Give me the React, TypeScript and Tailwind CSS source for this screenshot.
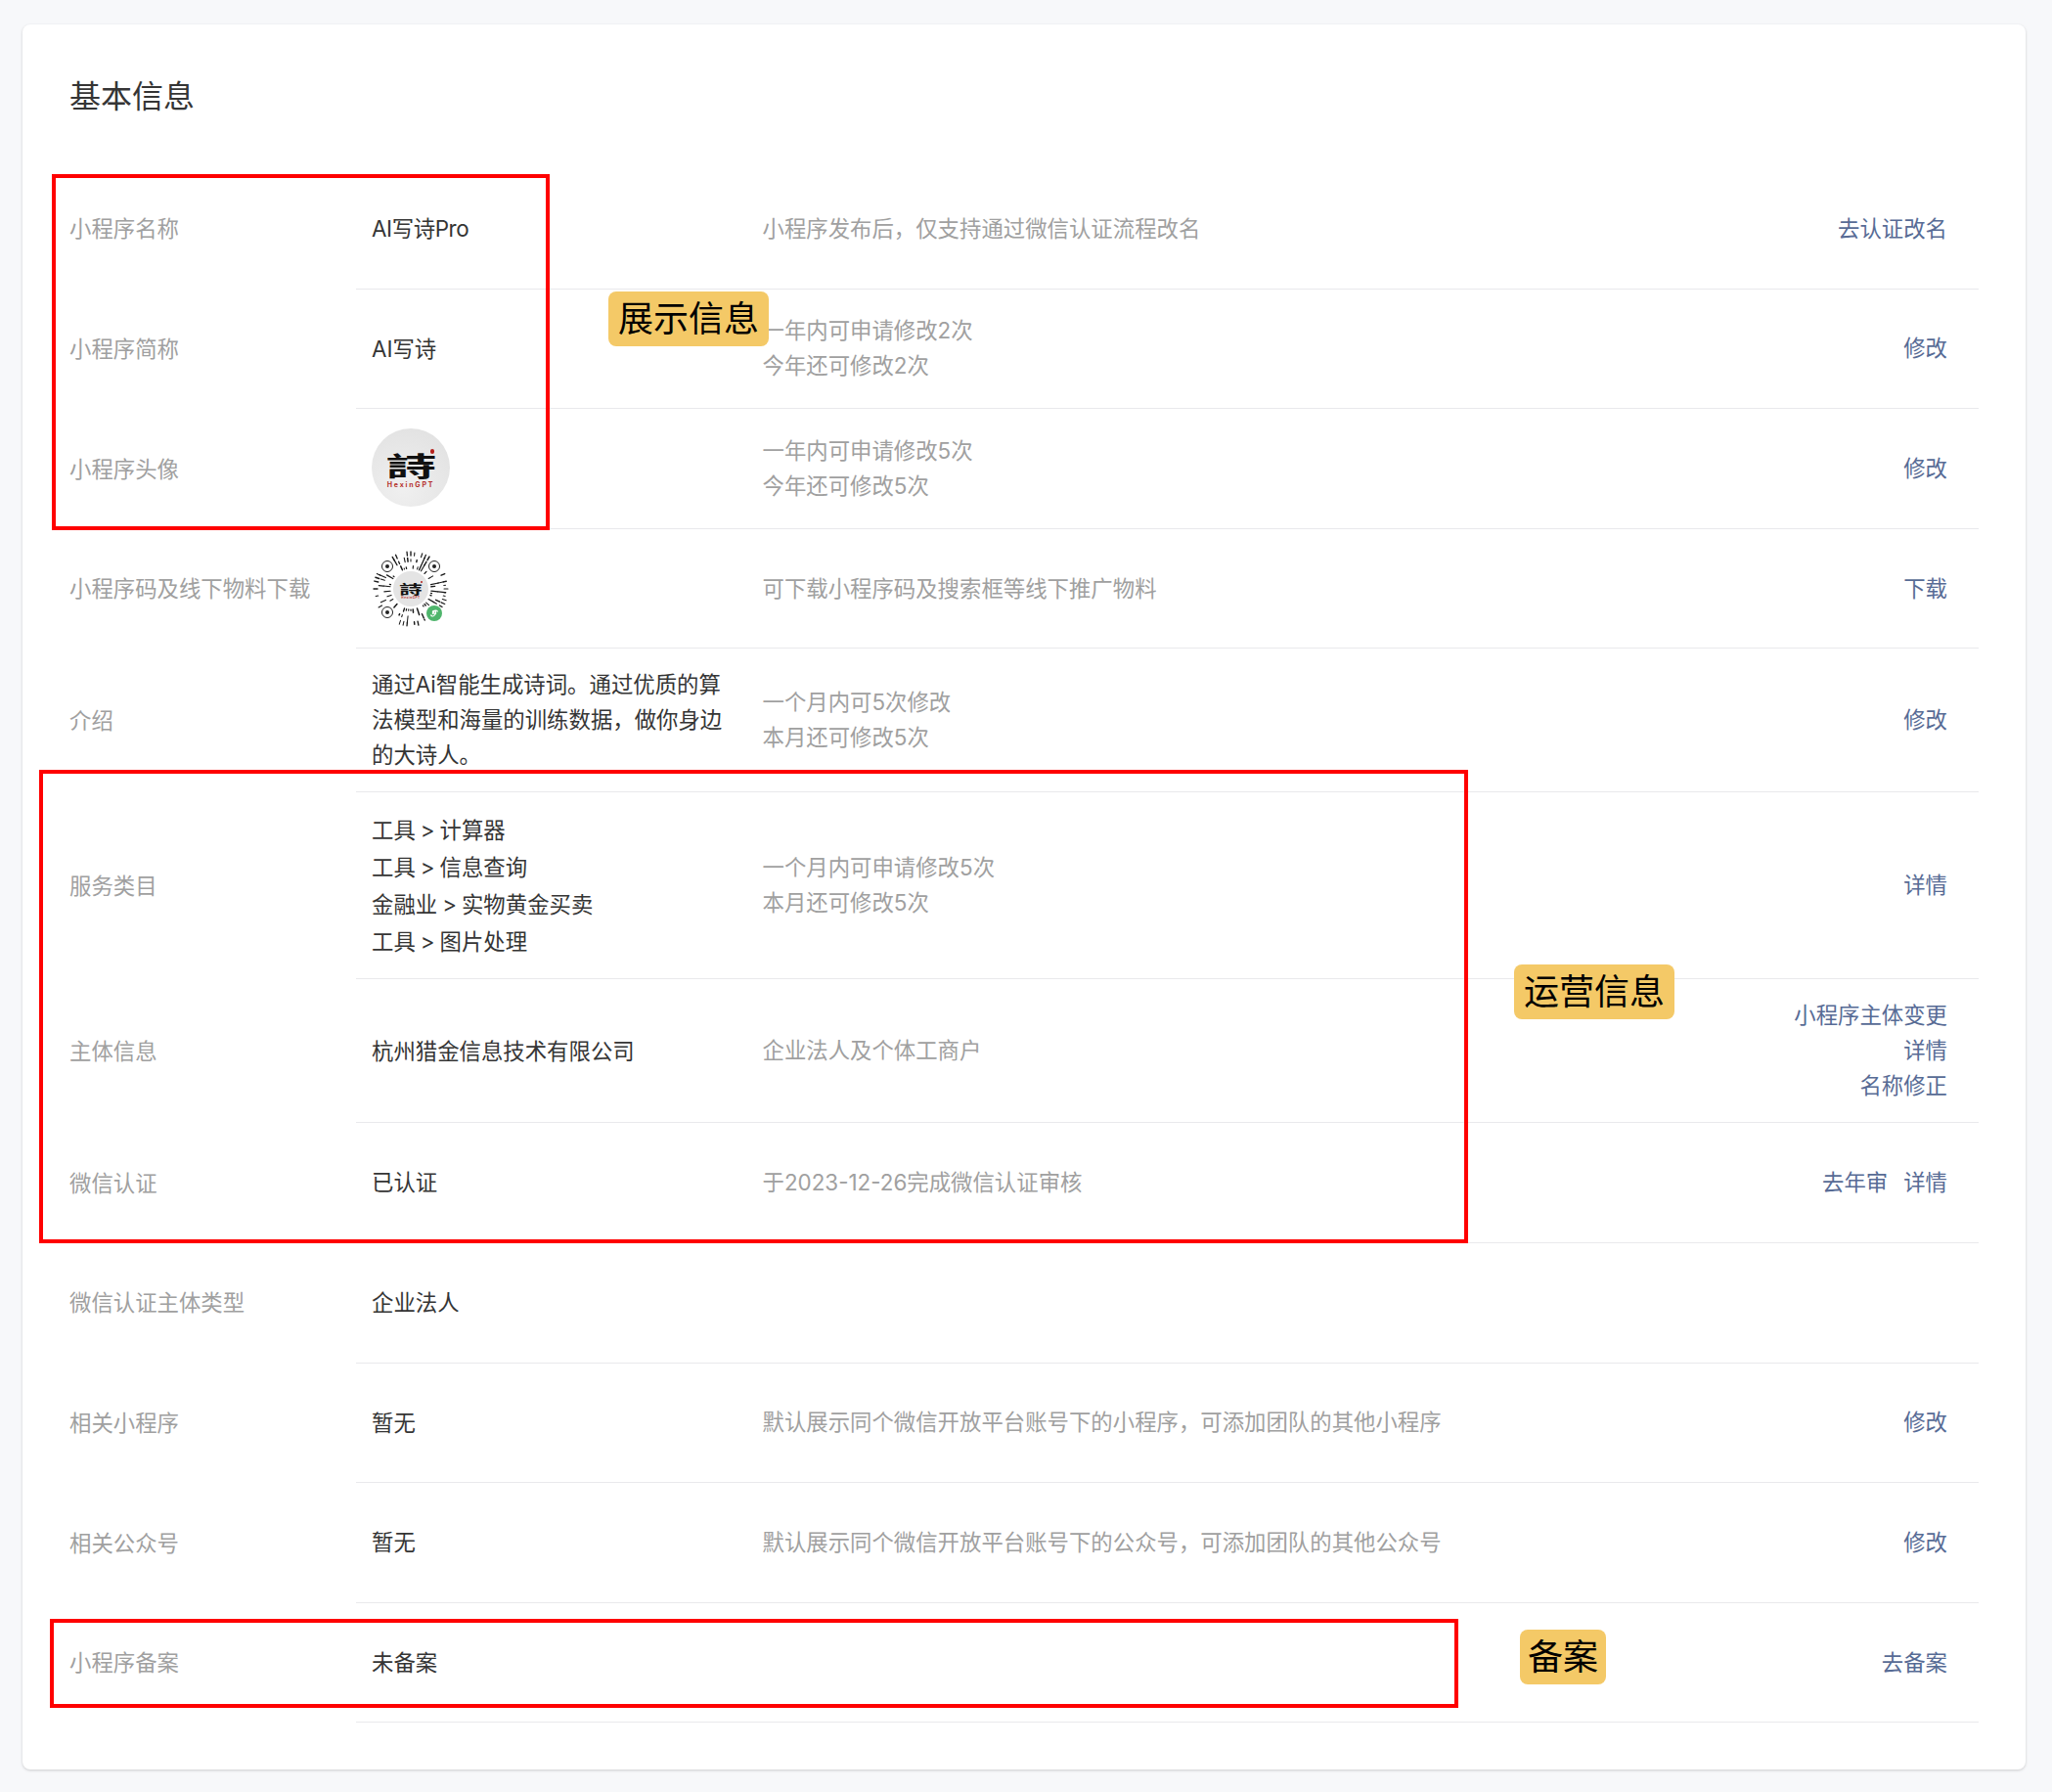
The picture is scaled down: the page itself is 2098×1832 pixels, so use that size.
import React from "react";

type Row = {
  label: string;
  value?: React.ReactNode;
  desc?: string[];
  links?: string[];
  inlineLinks?: boolean;
  height: string;
};

const Avatar = () => (
  <div className="relative mb-[2px] flex h-[80px] w-[80px] flex-col items-center justify-center rounded-full bg-[radial-gradient(circle_at_40%_75%,#f0f0f0,#dfdfdf)] pt-[6px]">
    <span className="h-[27px] scale-x-[1.9] text-[27px] font-bold leading-[27px] text-[#111] font-['Noto_Sans_CJK_TC',sans-serif]">詩</span>
    <span className="mt-[3px] text-[7px] font-bold leading-[8px] tracking-[1.8px] text-[#b5312c]">HexinGPT</span>
    <span className="absolute left-[60px] top-[21px] h-[5px] w-[4px] rounded-full bg-[#b5211c]" />
  </div>
);

const finders = [
  [16, 17],
  [64, 17],
  [16, 64],
  [64, 65],
];

// spokes of the mini program code, seeded so they stay the same on every render
const spokes = (() => {
  const out: { x1: number; y1: number; x2: number; y2: number; w: number }[] = [];
  let seed = 17;
  const next = () => {
    seed = (seed * 16807) % 2147483647;
    return seed / 2147483647;
  };
  const total = 60;
  for (let i = 0; i < total; i++) {
    const a = (i / total) * Math.PI * 2;
    [21, 28, 34].forEach((r) => {
      if (next() < 0.42) return;
      const end = Math.min(r + 1 + next() * 7, 38);
      const cx = 40 + Math.cos(a) * r;
      const cy = 40 + Math.sin(a) * r;
      const ex = 40 + Math.cos(a) * end;
      const ey = 40 + Math.sin(a) * end;
      const nearFinder = finders.some(
        ([fx, fy]) => Math.hypot(cx - fx, cy - fy) < 8.5 || Math.hypot(ex - fx, ey - fy) < 8.5
      );
      if (nearFinder) return;
      out.push({ x1: cx, y1: cy, x2: ex, y2: ey, w: 1 + next() * 0.5 });
    });
  }
  return out;
})();

const MiniCode = () => (
  <svg width="80" height="80" viewBox="0 0 80 80">
    {spokes.map((s, i) => (
      <line key={i} x1={s.x1} y1={s.y1} x2={s.x2} y2={s.y2} stroke="#1a1a1a" strokeWidth={s.w} strokeLinecap="round" />
    ))}
    {finders.slice(0, 3).map(([x, y]) => (
      <g key={x * 100 + y}>
        <circle cx={x} cy={y} r="5.5" fill="none" stroke="#222" strokeWidth="1" />
        <circle cx={x} cy={y} r="2" fill="#222" />
      </g>
    ))}
    <circle cx="40" cy="40" r="18" fill="#e4e4e4" />
    <text x="40" y="45" textAnchor="middle" fontSize="13" fontWeight="700" fill="#111" fontFamily="'Noto Sans CJK TC', sans-serif" transform="translate(-32 0) scale(1.8 1)">
      詩
    </text>
    <text x="40" y="50" textAnchor="middle" fontSize="3" fontWeight="700" letterSpacing="0.6" fill="#b5312c">
      HexinGPT
    </text>
    <circle cx="51" cy="33" r="1" fill="#b5211c" />
    <circle cx="64" cy="65" r="8" fill="#4fb56c" />
    <path d="M60.5 66.5a2 2 0 1 0 2-2.5M67.5 63.5a2 2 0 1 0-2 2.5M62.5 66v-3a2.5 2.5 0 0 1 3 0v3" fill="none" stroke="#fff" strokeWidth="1.2" />
  </svg>
);

const rows: Row[] = [
  { label: "小程序名称", value: <span className="tracking-[-0.4px]">AI写诗Pro</span>, desc: ["小程序发布后，仅支持通过微信认证流程改名"], links: ["去认证改名"], height: "h-[122.6px]" },
  { label: "小程序简称", value: "AI写诗", desc: ["一年内可申请修改2次", "今年还可修改2次"], links: ["修改"], height: "h-[122.6px]" },
  { label: "小程序头像", value: <Avatar />, desc: ["一年内可申请修改5次", "今年还可修改5次"], links: ["修改"], height: "h-[122.6px]" },
  { label: "小程序码及线下物料下载", value: <MiniCode />, desc: ["可下载小程序码及搜索框等线下推广物料"], links: ["下载"], height: "h-[122.6px]" },
  {
    label: "介绍",
    value: <p className="leading-[36px]">通过Ai智能生成诗词。通过优质的算法模型和海量的训练数据，做你身边的大诗人。</p>,
    desc: ["一个月内可5次修改", "本月还可修改5次"],
    links: ["修改"],
    height: "h-[147px]",
  },
  {
    label: "服务类目",
    value: (
      <div className="pt-[2px] leading-[38px] [word-spacing:-1.3px]">
        <div>工具 &gt; 计算器</div>
        <div>工具 &gt; 信息查询</div>
        <div>金融业 &gt; 实物黄金买卖</div>
        <div>工具 &gt; 图片处理</div>
      </div>
    ),
    desc: ["一个月内可申请修改5次", "本月还可修改5次"],
    links: ["详情"],
    height: "h-[191px]",
  },
  { label: "主体信息", value: "杭州猎金信息技术有限公司", desc: ["企业法人及个体工商户"], links: ["小程序主体变更", "详情", "名称修正"], height: "h-[147px]" },
  { label: "微信认证", value: "已认证", desc: ["于2023-12-26完成微信认证审核"], links: ["去年审", "详情"], inlineLinks: true, height: "h-[122.6px]" },
  { label: "微信认证主体类型", value: "企业法人", height: "h-[122.6px]" },
  { label: "相关小程序", value: "暂无", desc: ["默认展示同个微信开放平台账号下的小程序，可添加团队的其他小程序"], links: ["修改"], height: "h-[122.6px]" },
  { label: "相关公众号", value: "暂无", desc: ["默认展示同个微信开放平台账号下的公众号，可添加团队的其他公众号"], links: ["修改"], height: "h-[122.6px]" },
  { label: "小程序备案", value: "未备案", links: ["去备案"], height: "h-[122.6px]" },
];

const InfoRow = ({ row }: { row: Row }) => (
  <div className={`flex items-center ${row.height}`}>
    <div className="w-[341px] shrink-0 whitespace-nowrap pl-[48px] text-[#a0a0a0]">{row.label}</div>
    <div className="flex h-full min-w-0 flex-1 items-center border-b border-[#e9e9ec]">
      <div className="w-[415.5px] shrink-0 pl-4 pr-6 text-[#353535]">{row.value}</div>
      <div className="flex-1 leading-[36px] text-[#a0a0a0]">
        {row.desc?.map((d) => (
          <div key={d}>{d}</div>
        ))}
      </div>
      {row.links && (
        <div className={`shrink-0 pr-8 text-right leading-[36px] text-[#576b95] ${row.inlineLinks ? "flex gap-[16px]" : ""}`}>
          {row.links.map((l) => (
            <div key={l}>{l}</div>
          ))}
        </div>
      )}
    </div>
  </div>
);

const Tag = ({ text, className }: { text: string; className: string }) => (
  <div className={`absolute flex h-[56px] items-center justify-center rounded-[8px] bg-[#f4c967] text-[36px] text-black ${className}`}>{text}</div>
);

export default function App() {
  return (
    <div className="min-h-[1832px] bg-[#f7f8fa] pl-[23px] pr-[27px] pt-[25px] pb-[23px] text-[22.4px] font-['Inter','Noto_Sans_CJK_SC',sans-serif]">
      <div className="relative h-[1784px] rounded-[8px] bg-white pr-[48px] shadow-[0_1px_3px_rgba(0,0,0,0.18)]">
        <h1 className="pl-[48px] pt-[54px] pb-[54px] text-[32px] font-normal leading-[40px] text-[#353535]">基本信息</h1>
        {rows.map((row) => (
          <InfoRow key={row.label} row={row} />
        ))}

        {/* annotation boxes drawn over the screenshot */}
        <div className="absolute left-[30px] top-[153px] h-[364px] w-[509px] border-4 border-[#ff0000]" />
        <div className="absolute left-[17px] top-[762px] h-[484px] w-[1461px] border-4 border-[#ff0000]" />
        <div className="absolute left-[28px] top-[1630px] h-[91px] w-[1440px] border-4 border-[#ff0000]" />
        <Tag text="展示信息" className="left-[599px] top-[273px] w-[164px]" />
        <Tag text="运营信息" className="left-[1525px] top-[961px] w-[164px]" />
        <Tag text="备案" className="left-[1531px] top-[1641px] w-[88px]" />
      </div>
    </div>
  );
}
